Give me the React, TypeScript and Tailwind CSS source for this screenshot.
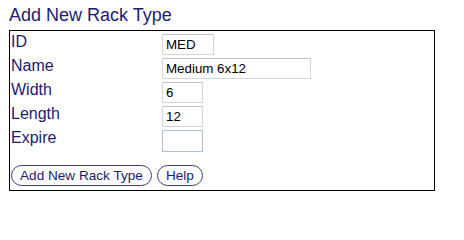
import React from "react";

const labelCls = "w-[151px] shrink-0 text-[16px] leading-[18px] pt-[1px] text-[#1c1c6e]";
const inputCls =
  "h-[21px] border border-[#d6d6d6] border-t-[#c4c4c4] bg-white px-[3px] text-[13.33px] text-black outline-none";

function Row({ label, children }: { label: string; children: React.ReactNode }) {
  return (
    <div className="flex h-[24px] items-start">
      <div className={labelCls}>{label}</div>
      <div>{children}</div>
    </div>
  );
}

export default function App() {
  return (
    <div className="w-[464px] h-[214px] bg-white" style={{ fontFamily: '"Liberation Sans", Arial, sans-serif' }}>
      <div className="pl-[9px] pt-[5px]">
        <div className="text-[18px] leading-[21px] text-[#1c1c6e] mb-[4px]">Add New Rack Type</div>
        <div className="w-[426px] h-[161px] border border-black pl-[1px] pt-[1px]">
          <Row label="ID">
            <input className={`${inputCls} w-[52px]`} defaultValue="MED" />
          </Row>
          <Row label="Name">
            <input className={`${inputCls} w-[149px]`} defaultValue="Medium 6x12" />
          </Row>
          <Row label="Width">
            <input className={`${inputCls} w-[41px]`} defaultValue="6" />
          </Row>
          <Row label="Length">
            <input className={`${inputCls} w-[41px]`} defaultValue="12" />
          </Row>
          <Row label="Expire">
            <input className={`h-[22px] w-[41px] border border-[#a8c3d6] bg-white px-[3px] text-[13.33px] outline-none`} defaultValue="" />
          </Row>
          <div className="flex gap-[5px] mt-[13px]">
            <button className="h-[21px] rounded-full border border-[#3a3a80] bg-white px-[8px] text-[13.6px] leading-[19px] text-[#1c1c6e]">
              Add New Rack Type
            </button>
            <button className="h-[21px] rounded-full border border-[#3a3a80] bg-white px-[8px] text-[13.6px] leading-[19px] text-[#1c1c6e]">
              Help
            </button>
          </div>
        </div>
      </div>
    </div>
  );
}
